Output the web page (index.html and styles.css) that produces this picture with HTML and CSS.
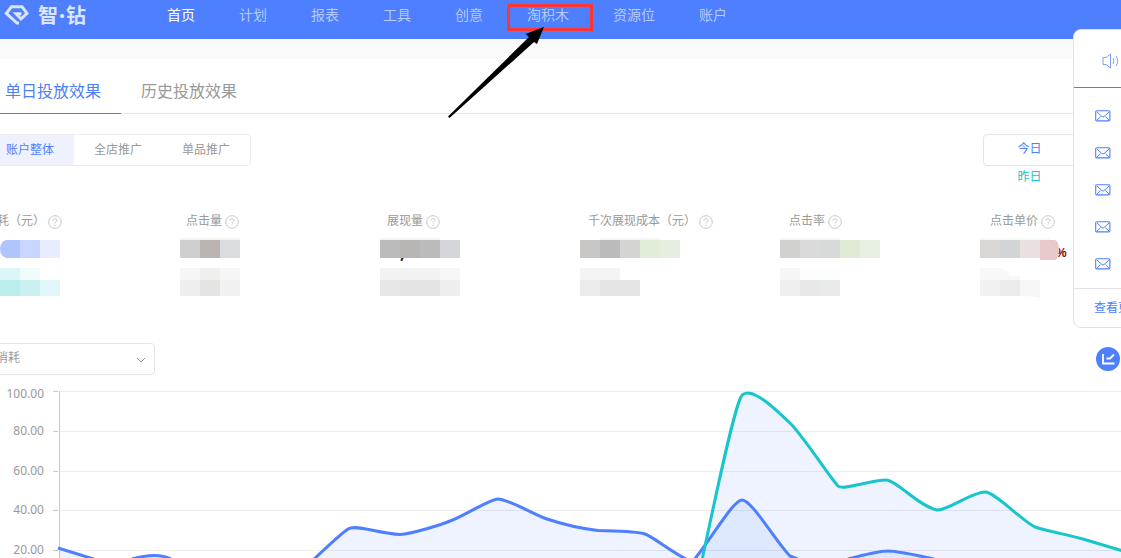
FILE: index.html
```html
<!DOCTYPE html>
<html lang="zh-CN">
<head>
<meta charset="utf-8">
<title>智·钻</title>
<link rel="stylesheet" href="styles.css">
</head>
<body>
<svg class="defs" aria-hidden="true">
  <symbol id="help" viewBox="0 0 14 14"><circle cx="7" cy="7" r="6.3" fill="none" stroke="#c6c6c6"/><path d="M5 5.6C5 4.3 5.8 3.6 7 3.6s2 .7 2 1.8C9 6.8 7 6.800 7 8.500M7 9.700v1.200" fill="none" stroke="#c6c6c6"/></symbol>
  <symbol id="mail" viewBox="0 0 16 12"><rect x=".7" y=".7" width="14.200" height="10.200" rx="1.200" fill="none" stroke="#4d7fff" stroke-width="1.100"/><path d="M2 2l5 4.600q1 .8 2 0L14 2M2 10l3.500-3.200M14 10l-3.500-3.200" fill="none" stroke="#4d7fff"/></symbol>
</svg>
<div class="page">
  <header class="header">
    <a class="logo" href="#">
      <svg width="26" height="20" viewBox="0 0 26 20"><path d="M15 18H13L2.300 8.300 7.500 1.700h10.500L23 8.300l-6 5.700-5-5.200h5.500" fill="none" stroke="#dbe5ff" stroke-width="3"/></svg>
      <span class="wordmark"><span>智</span><span class="dot">·</span><span>钻</span></span>
    </a>
    <nav class="nav">
      <a class="current" href="#">首页</a><a href="#">计划</a><a href="#">报表</a><a href="#">工具</a><a href="#">创意</a><a class="marked" href="#">淘积木<span class="mark"></span></a><a href="#">资源位</a><a href="#">账户</a>
    </nav>
    <svg class="arrow" width="100" height="94" viewBox="446 26 100 94"><path d="M544 27l-18.500 7 3.500 3L448 116.500l1.500 1.500L534 42l3 2z" fill="#000"/></svg>
  </header>

  <main class="main">
    <div class="tabs">
      <a class="tab selected" href="#">单日投放效果</a><a class="tab" href="#">历史投放效果</a>
    </div>
    <div class="filters">
      <div class="segment">
        <button class="selected">账户整体</button><button>全店推广</button><button>单品推广</button>
      </div>
      <div class="dates">
        <button class="today">今日</button>
        <button class="yesterday">昨日</button>
      </div>
    </div>

    <div class="labels">
      <div>消耗（元）<svg><use href="#help"/></svg></div>
      <div>点击量<svg><use href="#help"/></svg></div>
      <div>展现量<svg><use href="#help"/></svg></div>
      <div>千次展现成本（元）<svg><use href="#help"/></svg></div>
      <div>点击率<svg><use href="#help"/></svg></div>
      <div>点击单价<svg><use href="#help"/></svg></div>
    </div>
    <div class="values">
      <svg viewBox="0 0 100 60"><path d="M40 2H26q-6 2-6 9t6 9h14z" fill="#b0c4ff"/><path d="M40 2h20v18H40z" fill="#c9d6ff"/><path d="M60 2h20v18H60z" fill="#e7edff"/><path d="M20 30h20v12H20z" fill="#dcf6f7"/><path d="M40 30h20v12H40z" fill="#effcfc"/><path d="M20 42h20v16H20z" fill="#bdeeee"/><path d="M40 42h20v16H40z" fill="#c9f1f2"/><path d="M60 42h20v16H60z" fill="#e1f6f9"/></svg>
      <svg viewBox="0 0 100 60"><path d="M0 0h60v2H0z" fill="#f3f3f3"/><path d="M0 2h20v18H0z" fill="#cfcfcf"/><path d="M20 2h20v18H20z" fill="#bab5b2"/><path d="M40 2h20v18H40z" fill="#d9dde0"/><path d="M0 30h20v12H0zM40 30h20v12H40z" fill="#f6f6f6"/><path d="M20 30h20v12H20z" fill="#efefee"/><path d="M0 42h20v16H0z" fill="#eee"/><path d="M20 42h20v16H20z" fill="#e4e4e2"/><path d="M40 42h20v16H40z" fill="#f0f2f2"/></svg>
      <svg viewBox="0 0 100 60"><text x="20" y="21" class="comma">,</text><path d="M0 0h60v2H0z" fill="#f3f3f3"/><path d="M0 2h20v18H0zM40 2h20v18H40z" fill="#bbb"/><path d="M20 2h20v18H20z" fill="#b8b6b4"/><path d="M60 2h20v18H60z" fill="#d4d6d9"/><path d="M0 30h60v12H0z" fill="#f1f2f2"/><path d="M60 30h20v12H60z" fill="#f7f7f7"/><path d="M0 42h20v16H0z" fill="#e7e7e5"/><path d="M20 42h40v16H20z" fill="#e4e4e4"/><path d="M60 42h20v16H60z" fill="#eee"/></svg>
      <svg viewBox="0 0 100 60"><path d="M20 0h60v2H20z" fill="#f5f5f5"/><path d="M0 2h20v18H0z" fill="#c8c7c5"/><path d="M20 2h20v18H20z" fill="#bbb"/><path d="M40 2h20v18H40z" fill="#d4d4d3"/><path d="M60 2h20v18H60z" fill="#e1edd7"/><path d="M80 2h20v18H80z" fill="#e6eee0"/><path d="M0 30h40v12H0z" fill="#f3f4f4"/><path d="M0 42h20v16H0z" fill="#ebebeb"/><path d="M20 42h40v16H20z" fill="#e5e5e5"/></svg>
      <svg viewBox="0 0 100 60"><path d="M0 0h60v2H0z" fill="#f6f6f6"/><path d="M0 2h20v18H0z" fill="#d1d1cf"/><path d="M20 2h20v18H20z" fill="#dadada"/><path d="M40 2h20v18H40z" fill="#d8dad9"/><path d="M60 2h20v18H60z" fill="#dfebd5"/><path d="M80 2h20v18H80z" fill="#e7efe1"/><path d="M0 30h20v12H0z" fill="#f6f6f4"/><path d="M20 30h40v12H20z" fill="#fcfefd"/><path d="M0 42h20v16H0z" fill="#efefef"/><path d="M20 42h20v16H20z" fill="#e8e8e8"/><path d="M40 42h20v16H40z" fill="#e9ebea"/></svg>
      <svg viewBox="0 0 100 60"><path d="M0 0h70v2H0z" fill="#f7f7f7"/><path d="M0 2h20v18H0z" fill="#d8d7d6"/><path d="M20 2h20v18H20z" fill="#d2d4d6"/><path d="M40 2h20v18H40z" fill="#e9e1df"/><text x="76" y="19" class="percent">%</text><path d="M60 2h15q4 2 4 9t-3 11H60z" fill="#e9c8ca"/><path d="M0 30h20q8 2 10 8h10v4H0z" fill="#f8f8f8"/><path d="M0 42h20v16H0z" fill="#f2f1ef"/><path d="M20 42h20v16H20z" fill="#eaecea"/><path d="M40 42h20v18q-8-2-20-2z" fill="#f7f7f7"/></svg>
    </div>

    <div class="chart-bar">
      <div class="picker">
        <select aria-label="指标"><option>消耗</option></select>
        <svg width="10" height="6" viewBox="0 0 10 6"><path d="M1 1l4 4 4-4" fill="none" stroke="#999"/></svg>
      </div>
      <button class="chart-button" aria-label="图表"><svg width="24" height="24" viewBox="0 0 24 24"><path d="M7 7v9.500h11.500M10.500 11.500h3.500l4-4" fill="none" stroke="#fff" stroke-width="1.800"/></svg></button>
    </div>
    <svg class="chart" viewBox="0 376 1121 182">
      <path d="M60 391.500H1121M60 431.500H1121M60 471.500H1121M60 510.500H1121M60 550.500H1121" stroke="#ececec"/>
      <path d="M53 391.500h5M53 431.500h5M53 471.500h5M53 510.500h5M53 550.500h5M59.500 391V558" stroke="#c8c8c8"/>
      <g class="axis"><text x="44" y="398">100.00</text><text x="44" y="435">80.00</text><text x="44" y="475">60.00</text><text x="44" y="514">40.00</text><text x="44" y="554">20.00</text></g>
      <g fill="#4d7fff" fill-opacity=".095">
        <path d="M59 548L94 560H59zM130 560Q157 551 174 560zM313 560C330 544 342 533 348 529C356 524 380 534 400 534.500C412 534 440 525 450 521C462 517 488 500 498 499C508 499 535 515 547 519C565 525 585 529 598 530.500C612 531 636 531 645 534C655 538 670 551 688 560z"/>
        <path d="M694 560C710 541 733 500 742 500C752 500 776 542 790 556L800 560zM848 560Q878 551 888 551T936 560z"/>
        <path d="M702 560C715 500 733 412 741 397C743 392 750 392 757 396C768 401 780 414 791 424C806 440 828 475 838 486C843 491 870 480 886 480C896 480 920 507 937 510C947 511 972 492 985 492C995 492 1021 520 1035 527C1050 532 1065 534 1083 539L1121 551V560z"/>
      </g>
      <g fill="none" stroke="#4d7fff" stroke-width="3">
        <path d="M58 548L97 560M132 559Q157 552 171 559M312 561C330 544 342 533 348 529C356 524 380 534 400 534.500C412 534 440 525 450 521C462 517 488 500 498 499C508 499 535 515 547 519C565 525 585 529 598 530.500C612 531 636 531 645 534C655 538 670 551 688 560"/>
        <path d="M693 561C710 541 733 500 742 500C752 500 776 542 790 556L800 560M848 559Q878 551 888 551T934 559"/>
      </g>
      <path d="M702 560C715 500 733 412 741 397C743 392 750 392 757 396C768 401 780 414 791 424C806 440 828 475 838 486C843 491 870 480 886 480C896 480 920 507 937 510C947 511 972 492 985 492C995 492 1021 520 1035 527C1050 532 1065 534 1083 539L1123 551" fill="none" stroke="#17c5cc" stroke-width="3"/>
    </svg>
  </main>

  <aside class="notices">
    <div class="notices-head"><svg width="18" height="16" viewBox="0 0 18 16"><path d="M1 4.500h3L8.500 1v14L4 11.500H1zM11 5q2 3 0 6M14 3q3.500 5 0 10" fill="none" stroke="#7f9fff"/></svg></div>
    <ul>
      <li><svg><use href="#mail"/></svg></li><li><svg><use href="#mail"/></svg></li><li><svg><use href="#mail"/></svg></li><li><svg><use href="#mail"/></svg></li><li><svg><use href="#mail"/></svg></li>
    </ul>
    <a class="more" href="#">查看更多</a>
  </aside>
</div>
</body>
</html>
```
FILE: styles.css
```css
* { box-sizing: border-box; }
body {
  margin: 0;
  font: 12px/20px "Noto Sans", "Noto Sans CJK SC", sans-serif;
  color: #999;
  background: #fff;
}
a { color: inherit; text-decoration: none; }
button, select { font: inherit; color: inherit; }
.defs { position: absolute; width: 0; height: 0; }
.page { position: relative; overflow: hidden; }

.header {
  position: relative;
  display: flex;
  align-items: flex-start;
  height: 39px;
  background: #4d7fff;
}
.logo {
  display: flex;
  align-items: center;
  gap: 8px;
  width: 163px;
  height: 29px;
  padding-left: 4px;
  color: #dbe5ff;
  font: 700 20px/28px "Noto Sans CJK SC", sans-serif;
}
.wordmark { display: flex; }
.dot { display: flex; justify-content: center; width: 8px; font-size: 16px; }
.nav {
  display: flex;
  gap: 44px;
  padding: 5px 0 0 4px;
  font-size: 14px;
  color: #b5caff;
}
.nav .current { color: #fff; }
.marked { position: relative; }
.mark {
  position: absolute;
  top: -1px;
  left: -20px;
  width: 86px;
  height: 27px;
  border: 3px solid #fc3535;
}
.arrow { position: absolute; top: 26px; left: 446px; z-index: 2; }

.main { border-top: 20px solid #fafafa; }
.tabs { display: flex; border-bottom: 1px solid #e4e4e4; font-size: 16px; }
.tab { margin-bottom: -1px; padding: 22px 20px 12px; border-bottom: 1px solid transparent; }
.tab.selected { padding-left: 5px; color: #4d7fff; border-color: #4d7fff; }

.filters {
  display: flex;
  justify-content: space-between;
  align-items: flex-start;
  height: 76px;
  margin: 20px 0 0 -15px;
}
.segment {
  display: flex;
  height: 32px;
  border: 1px solid #ececec;
  border-radius: 4px;
  overflow: hidden;
}
.segment button { padding: 0 20px; border: 0; background: #fff; }
.segment .selected { color: #4d7fff; background: #eff1ff; }
.dates { display: flex; flex-direction: column; gap: 1px; width: 138px; }
.dates button { padding: 0 45px 0 0; background: #fff; }
.dates .today { height: 32px; padding-bottom: 2px; border: 1px solid #e4e4e4; border-radius: 4px; color: #4d7fff; }
.yesterday { height: 20px; border: 0; color: #17c5cc; }

.labels {
  display: grid;
  grid-template-columns: repeat(6, 1fr);
  height: 28px;
  margin: 0 -70px 0 -15px;
}
.labels div { display: flex; align-items: center; gap: 3px; height: 22px; white-space: nowrap; }
.labels svg { flex: none; width: 14px; height: 14px; margin-top: 2px; }
.values {
  display: grid;
  grid-template-columns: repeat(6, 1fr);
  height: 104px;
  margin: 0 -59px 0 -20px;
}
.values svg { width: 100px; height: 60px; overflow: visible; }
.comma { font: 700 16px "Noto Sans", sans-serif; fill: #223; }
.percent { font: 700 12px "Liberation Sans", sans-serif; fill: #8b0000; }

.chart-bar { display: flex; justify-content: space-between; align-items: center; height: 34px; padding: 0 1px 1px 0; }
.picker { position: relative; }
.picker select {
  display: block;
  width: 160px;
  height: 32px;
  margin-left: -5px;
  padding: 0 0 2px;
  border: 1px solid #e4e4e4;
  border-radius: 4px;
  background: #fff;
  appearance: none;
}
.picker svg { position: absolute; right: 9px; top: 14px; pointer-events: none; }
.chart-button { display: flex; width: 24px; height: 24px; padding: 0; border: 0; border-radius: 50%; background: #4d7fff; }
.chart { display: block; width: 100%; }
.axis { font: 12px "Noto Sans", sans-serif; fill: #999; text-anchor: end; }

.notices {
  position: absolute;
  top: 29px;
  right: -152px;
  width: 200px;
  border: 1px solid #e2e2e2;
  border-radius: 8px;
  background: #fff;
}
.notices-head { display: flex; align-items: center; height: 58px; padding: 4px 0 0 28px; border-bottom: 1px solid #4d7fff; }
.notices ul { margin: 0; padding: 9px 0 6px 21px; list-style: none; }
.notices li { display: flex; align-items: center; height: 37px; }
.notices li svg { width: 16px; height: 12px; }
.more { display: block; padding: 9px 0 9px 20px; border-top: 1px solid #e2e2e2; color: #4d7fff; }
```
